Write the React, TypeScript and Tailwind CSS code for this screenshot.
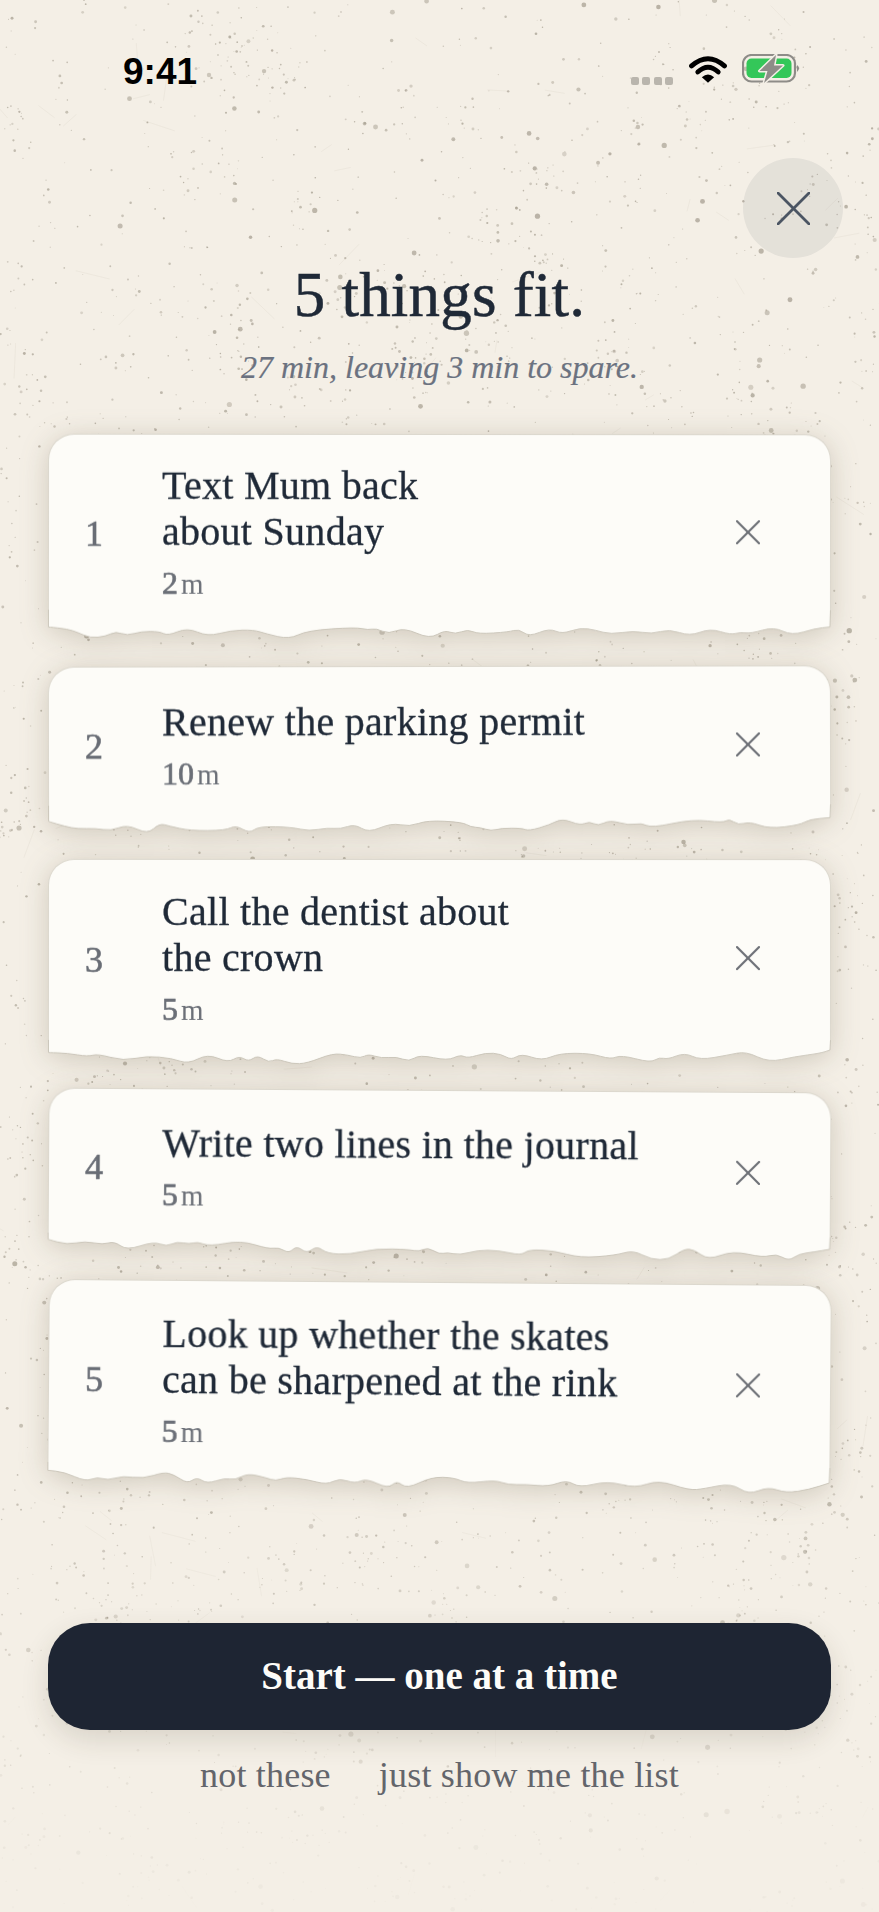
import React from "react";

function mulberry(seed: number) {
  return () => {
    seed |= 0;
    seed = (seed + 0x6d2b79f5) | 0;
    let t = Math.imul(seed ^ (seed >>> 15), 1 | seed);
    t = (t + Math.imul(t ^ (t >>> 7), 61 | t)) ^ t;
    return ((t ^ (t >>> 14)) >>> 0) / 4294967296;
  };
}

function fade(y: number) {
  if (y < 1450) return 1;
  if (y > 1900) return 0.1;
  return 1 - ((y - 1450) / 450) * 0.9;
}

function Speckle() {
  const r = mulberry(41);
  const centers = Array.from({ length: 320 }, () => ({ x: r() * 879, y: r() * 1912 }));
  const dots = Array.from({ length: 5200 }, () => {
    const big = r();
    const clustered = r() < 0.45;
    const c = centers[Math.floor(r() * centers.length)];
    return {
      x: clustered ? c.x + (r() - 0.5) * 46 : r() * 879,
      y: clustered ? c.y + (r() - 0.5) * 46 : r() * 1912,
      r: big > 0.95 ? 1.6 + r() * 1.1 : big > 0.6 ? 0.9 + r() * 0.6 : 0.45 + r() * 0.45,
      o: 0.26 + r() * 0.3,
    };
  });
  const lines = Array.from({ length: 110 }, () => {
    const a = r() * Math.PI * 2;
    const l = 10 + r() * 26;
    const x = r() * 879;
    const y = r() * 1912;
    return { x, y, x2: x + Math.cos(a) * l, y2: y + Math.sin(a) * l };
  });
  return (
    <svg className="absolute inset-0 pointer-events-none blur-[0.5px]" width="879" height="1912" viewBox="0 0 879 1912">
      {lines.map((l, i) => (
        <line key={i} x1={l.x} y1={l.y} x2={l.x2} y2={l.y2} stroke="#b5ac9a" strokeWidth="0.6" opacity={0.18 * fade(l.y)} />
      ))}
      {dots.map((d, i) => (
        <circle key={i} cx={d.x} cy={d.y} r={d.r} fill="#8a8272" opacity={d.o * fade(d.y)} />
      ))}
    </svg>
  );
}

const edges: number[][] = [
  [17,52,55,58,75,68,100,85,130,80,150,65,172,78,200,65,235,65,252,78,290,54,330,80,375,62,420,60,445,72,490,88,525,62,620,52,645,60,660,55,685,72,715,53,765,87,795,60,815,73,840,58,860,72,920,66,940,57,960,80,1000,55,1025,72,1060,53,1090,60,1120,73,1165,62,1200,72,1235,57,1275,78,1315,55,1355,74,1375,66,1395,70,1440,50,1475,76,1520,55,1548,50],
  [17,47,50,62,75,70,110,68,140,76,172,57,212,86,235,54,255,62,295,76,365,75,385,60,412,84,430,63,495,66,528,78,565,68,590,72,618,57,645,83,690,54,725,65,760,46,830,52,845,66,865,68,885,78,905,70,945,70,960,78,1000,60,1025,41,1060,62,1078,50,1095,64,1118,46,1155,62,1180,55,1200,70,1280,44,1340,55,1352,43,1370,62,1392,52,1430,73,1490,62,1510,45,1548,40],
  [17,38,55,40,95,50,115,42,165,63,210,48,260,55,292,72,330,42,370,68,392,48,410,65,428,46,450,68,465,56,495,72,525,70,575,40,605,45,630,55,645,42,670,55,700,50,725,65,745,44,800,62,825,44,840,55,875,38,905,42,925,60,945,41,985,62,1020,40,1080,40,1120,58,1140,45,1198,68,1215,52,1232,58,1265,38,1295,60,1350,45,1385,34,1430,67,1480,50,1530,40,1548,30],
  [17,20,55,36,90,25,125,35,148,25,172,52,225,25,250,40,270,25,295,32,310,25,335,38,395,20,450,45,470,40,490,58,505,35,525,58,545,35,565,58,610,60,660,42,725,44,745,50,762,37,785,58,800,52,825,60,860,45,900,45,945,60,960,42,1010,45,1060,66,1130,58,1165,42,1200,70,1235,70,1265,37,1285,40,1312,70,1360,42,1420,62,1445,50,1470,72,1490,50,1520,44,1548,36],
  [17,25,50,30,92,58,115,44,135,54,165,40,205,48,245,28,265,35,292,62,310,42,330,62,365,44,385,50,410,30,445,42,465,52,485,40,525,46,565,62,590,42,620,58,642,42,685,72,702,48,722,72,770,36,815,38,840,55,895,44,920,58,955,56,1000,62,1035,42,1060,65,1115,44,1170,65,1215,40,1275,70,1305,65,1358,48,1392,82,1430,58,1465,76,1510,65,1548,45],
];

const W = 783;

function Torn({ pts }: { pts: number[] }) {
  const p: [number, number][] = [];
  for (let i = 0; i < pts.length; i += 2) p.push([(pts[i] - 17) / 1.96, pts[i + 1] / 3]);
  p[p.length - 1][0] = W - 1;
  let d = `M0.5 0 L0.5 ${p[0][1]}`;
  for (let i = 0; i < p.length - 1; i++) {
    const mx = (p[i][0] + p[i + 1][0]) / 2;
    const my = (p[i][1] + p[i + 1][1]) / 2;
    d += ` Q${p[i][0].toFixed(1)} ${p[i][1].toFixed(1)} ${mx.toFixed(1)} ${my.toFixed(1)}`;
  }
  d += ` L${W - 1} ${p[p.length - 1][1].toFixed(1)} L${W - 0.5} 0`;
  return (
    <svg className="block -mt-px" width={W} height="35" viewBox={`0 0 ${W} 35`}>
      <path d={`${d} Z`} fill="#fdfcf8" stroke="none" />
      <path d={d} fill="none" stroke="#cbc6ba" strokeWidth="1" />
    </svg>
  );
}

function XIcon({ size, color, width }: { size: number; color: string; width: number }) {
  return (
    <svg width={size} height={size} viewBox={`0 0 ${size} ${size}`} fill="none" stroke={color} strokeWidth={width} strokeLinecap="round">
      <line x1="1" y1="1" x2={size - 1} y2={size - 1} />
      <line x1={size - 1} y1="1" x2="1" y2={size - 1} />
    </svg>
  );
}

type Item = { n: number; lines: string[]; mins: string; rot: string; h: string; mb: string; numY: string; xY: string; textY: string; edge: number };

const items: Item[] = [
  { n: 1, lines: ["Text Mum back", "about Sunday"], mins: "2", rot: "rotate-[0.05deg]", h: "h-[177px]", mb: "mb-[21px]", numY: "mt-[22px]", xY: "mt-[18px]", textY: "mt-[16px]", edge: 0 },
  { n: 2, lines: ["Renew the parking permit"], mins: "10", rot: "-rotate-[0.1deg]", h: "h-[140px]", mb: "mb-[19px]", numY: "mt-[19px]", xY: "mt-[17px]", textY: "mt-[14px]", edge: 1 },
  { n: 3, lines: ["Call the dentist about", "the crown"], mins: "5", rot: "rotate-[0.02deg]", h: "h-[182px]", mb: "mb-[15px]", numY: "mt-[19px]", xY: "mt-[15px]", textY: "mt-[12px]", edge: 2 },
  { n: 4, lines: ["Write two lines in the journal"], mins: "5", rot: "rotate-[0.35deg]", h: "h-[146px]", mb: "mb-[12px]", numY: "mt-[11px]", xY: "mt-[14px]", textY: "mt-[7px]", edge: 3 },
  { n: 5, lines: ["Look up whether the skates", "can be sharpened at the rink"], mins: "5", rot: "rotate-[0.45deg]", h: "h-[184px]", mb: "mb-[123px]", numY: "mt-[15px]", xY: "mt-[17px]", textY: "mt-[12px]", edge: 4 },
];

function Card({ it }: { it: Item }) {
  return (
    <div className={`w-[783px] ${it.mb} ${it.rot} drop-shadow-[0_4px_14px_rgba(90,78,55,0.24)]`}>
      <div className={`${it.h} flex items-center bg-[#fdfcf8] rounded-t-[26px] border-x border-t border-[#dcd8ce]`}>
        <div className={`w-[113px] pr-[23px] text-center shrink-0 text-[36px] leading-[40px] text-[#696d75] [-webkit-text-stroke:0.6px_#696d75] ${it.numY}`}>{it.n}</div>
        <div className={`flex-1 ${it.textY}`}>
          <div className="text-[40px] leading-[46px] tracking-[0.28px] text-[#1f2937] [-webkit-text-stroke:0.3px_#1f2937]">
            {it.lines.map((l) => (
              <div key={l}>{l}</div>
            ))}
          </div>
          <div className="mt-[12px] h-[32px] flex items-baseline text-[#6b6f77] leading-[32px]">
            <span className="text-[32px] [-webkit-text-stroke:0.7px_#6b6f77]">{it.mins}</span>
            <span className="ml-[3px] text-[29px]">m</span>
          </div>
        </div>
        <div className={`w-[24px] mr-[70px] shrink-0 ${it.xY}`}>
          <XIcon size={24} color="#6d7076" width={2.2} />
        </div>
      </div>
      <Torn pts={edges[it.edge]} />
    </div>
  );
}

export default function App() {
  return (
    <div className="relative w-[879px] h-[1912px] overflow-hidden bg-[#f4efe6] font-['Liberation_Serif',serif]">
      <Speckle />
      <div className="relative flex flex-col items-center">
        <div className="w-full h-[158px] pt-[50px] pl-[123px] pr-[77px] flex justify-between items-start">
          <div className="font-['Liberation_Sans',sans-serif] font-bold text-[37px] leading-[44px] text-black">9:41</div>
          <div className="flex items-start pt-[5px]">
            <div className="flex gap-[3.5px] mt-[22px] mr-[16px]">
              <div className="w-[8px] h-[8px] rounded-[2px] bg-[#b9b5ad]" />
              <div className="w-[8px] h-[8px] rounded-[2px] bg-[#b9b5ad]" />
              <div className="w-[8px] h-[8px] rounded-[2px] bg-[#b9b5ad]" />
              <div className="w-[8px] h-[8px] rounded-[2px] bg-[#b9b5ad]" />
            </div>
            <svg width="38" height="28" viewBox="0 0 37 27" className="mr-[15px]">
              <path d="M2.5 10.5 Q18.5 -3.5 34.5 10.5" fill="none" stroke="#000" strokeWidth="4.8" strokeLinecap="round" />
              <path d="M8.5 16.5 Q18.5 7 28.5 16.5" fill="none" stroke="#000" strokeWidth="4.6" strokeLinecap="round" />
              <path d="M12.5 21.5 Q18.5 16 24.5 21.5 L18.5 27 Z" fill="#000" />
            </svg>
            <svg width="60" height="30" viewBox="0 0 60 30" className="-mt-[1px]">
              <rect x="1" y="1" width="52" height="26.5" rx="8.5" fill="none" stroke="#8e8c88" strokeWidth="2.2" />
              <rect x="4.5" y="4.5" width="45" height="19.5" rx="5" fill="#34c759" />
              <path d="M55 11 Q59 14 55 18 Z" fill="#8e8c88" />
              <path d="M34 1 L17.5 17 L25.5 17 L22 29 L41 11.5 L32 11.5 Z" fill="#8e8c88" stroke="#f4efe6" strokeWidth="3" paintOrder="stroke" strokeLinejoin="round" />
            </svg>
          </div>
        </div>
        <div className="w-full flex justify-end pr-[36px]">
          <div className="w-[100px] h-[100px] rounded-full bg-[#1f2937]/[0.07] flex items-center justify-center">
            <XIcon size={33} color="#4b5563" width={2.8} />
          </div>
        </div>
        <h1 className="h-[72px] mt-[1px] text-[63px] leading-[72px] tracking-[0.2px] text-[#1f2937] [-webkit-text-stroke:0.5px_#1f2937]">5 things fit.</h1>
        <p className="mt-[18px] h-[36px] text-[32px] leading-[36px] italic text-[#6b7280] [-webkit-text-stroke:0.2px_#6b7280]">27 min, leaving 3 min to spare.</p>
        <div className="mt-[49px] flex flex-col">
          {items.map((it) => (
            <Card key={it.n} it={it} />
          ))}
        </div>
        <button className="w-[783px] h-[107px] rounded-[42px] bg-[#1e2533] text-[#fdfcf8] text-[39px] font-bold shadow-[0_10px_28px_rgba(60,50,30,0.14)]">
          Start — one at a time
        </button>
        <div className="mt-[25px] flex gap-[48px] text-[36px] leading-[40px] tracking-[0.2px] text-[#63656b]">
          <span>not these</span>
          <span>just show me the list</span>
        </div>
      </div>
    </div>
  );
}
